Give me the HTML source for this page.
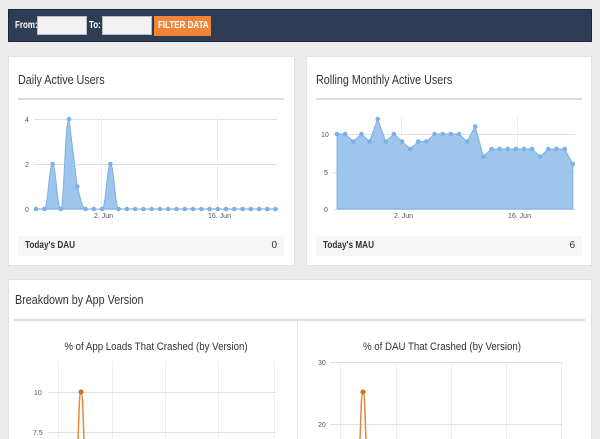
<!DOCTYPE html>
<html><head><style>
*{margin:0;padding:0;box-sizing:border-box}
html,body{width:600px;height:439px;overflow:hidden}
body{background:#ececec;font-family:"Liberation Sans",sans-serif;position:relative}
.bar{position:absolute;left:8px;top:9px;width:584px;height:33px;background:#2e3d55;border:1px solid #1c2638}
.lbl{position:absolute;top:10px;color:#fff;font-size:10px;font-weight:bold;white-space:nowrap;transform:scaleX(0.8);transform-origin:left}
.inp{position:absolute;top:6px;width:50px;height:19px;background:#f2f2f2;border:1px solid #bbb}
.btn{position:absolute;left:145px;top:6px;width:57px;height:20px;background:#f0853a;}
.btn span{position:absolute;left:4px;top:0;color:#fff;font-size:10px;font-weight:bold;line-height:20px;white-space:nowrap;transform:scaleX(0.8);transform-origin:left}
.card{position:absolute;background:#fff;border:1px solid #e2e2e2}
.t{position:absolute;font-size:12.5px;color:#333;white-space:nowrap;transform:scaleX(0.86);transform-origin:left}
.st{position:absolute;font-size:11px;color:#333;white-space:nowrap;text-align:center;transform:scaleX(0.88)}
.hr{position:absolute;height:2px;background:#ddd}
.foot{position:absolute;height:20px;background:#f6f6f6;font-size:10px;color:#333;line-height:20px}
.foot b{position:absolute;left:7px;white-space:nowrap;transform:scaleX(0.82);transform-origin:left}
.foot span{position:absolute;right:7px}
svg{position:absolute;left:0;top:0}
</style></head><body>
<div class="bar">
<div class="lbl" style="left:6px">From:</div><div class="inp" style="left:28px"></div>
<div class="lbl" style="left:80px">To:</div><div class="inp" style="left:93px"></div>
<div class="btn"><span>FILTER DATA</span></div>
</div>
<div class="card" style="left:8px;top:56px;width:287px;height:210px"></div>
<div class="card" style="left:306px;top:56px;width:286px;height:210px"></div>
<div class="card" style="left:8px;top:279px;width:584px;height:165px"></div>
<div class="t" style="left:18px;top:73px">Daily Active Users</div>
<div class="hr" style="left:18px;top:98px;width:266px"></div>
<div class="t" style="left:316px;top:73px">Rolling Monthly Active Users</div>
<div class="hr" style="left:316px;top:98px;width:266px"></div>
<div class="foot" style="left:18px;top:236px;width:266px"><b>Today's DAU</b><span>0</span></div>
<div class="foot" style="left:316px;top:236px;width:266px"><b>Today's MAU</b><span>6</span></div>
<div class="t" style="left:15px;top:293px">Breakdown by App Version</div>
<div class="hr" style="left:14px;top:319px;width:571px"></div>
<div style="position:absolute;left:297px;top:321px;width:1px;height:118px;background:#e4e4e4"></div>
<div class="st" style="left:0;width:312px;top:341px">% of App Loads That Crashed (by Version)</div>
<div class="st" style="left:297px;width:290px;top:341px">% of DAU That Crashed (by Version)</div>
<svg width="600" height="439" font-family="Liberation Sans" font-size="7" fill="#555">
<g stroke="#e0e0e0" stroke-width="1">
<line x1="34" y1="119.5" x2="277" y2="119.5"/><line x1="34" y1="164.5" x2="277" y2="164.5"/><line x1="34" y1="209.5" x2="277" y2="209.5"/>
<line x1="101.5" y1="115" x2="101.5" y2="209" stroke="#eee"/><line x1="217.5" y1="115" x2="217.5" y2="209" stroke="#eee"/>
<line x1="333" y1="134.5" x2="575" y2="134.5"/><line x1="333" y1="172.5" x2="575" y2="172.5"/><line x1="333" y1="209.5" x2="575" y2="209.5"/>
<line x1="401.5" y1="117" x2="401.5" y2="209" stroke="#eee"/><line x1="517.5" y1="117" x2="517.5" y2="209" stroke="#eee"/>
<g stroke="#eee"><line x1="58.5" y1="361" x2="58.5" y2="439"/><line x1="112.5" y1="361" x2="112.5" y2="439"/><line x1="165.5" y1="361" x2="165.5" y2="439"/><line x1="218.5" y1="361" x2="218.5" y2="439"/><line x1="274.5" y1="361" x2="274.5" y2="439"/>
<line x1="340.5" y1="362" x2="340.5" y2="439"/><line x1="396.5" y1="362" x2="396.5" y2="439"/><line x1="451.5" y1="362" x2="451.5" y2="439"/><line x1="506.5" y1="362" x2="506.5" y2="439"/><line x1="561.5" y1="362" x2="561.5" y2="439"/></g>
<line x1="48" y1="392.5" x2="276" y2="392.5"/><line x1="48" y1="432.5" x2="276" y2="432.5"/>
<line x1="330" y1="362.5" x2="562" y2="362.5"/><line x1="330" y1="424.5" x2="562" y2="424.5"/>
</g>
<text x="25" y="122">4</text><text x="25" y="167">2</text><text x="25" y="212">0</text>
<text x="94" y="218">2. Jun</text><text x="208" y="218">16. Jun</text>
<text x="321" y="137">10</text><text x="324" y="175">5</text><text x="324" y="212">0</text>
<text x="394" y="218">2. Jun</text><text x="508" y="218">16. Jun</text>
<text x="34" y="395">10</text><text x="33" y="435">7.5</text>
<text x="318" y="365">30</text><text x="318" y="427">20</text>
<path fill="#9ec5ec" stroke="#7cb0e6" stroke-width="1" d="M36 209 L44.3 209 C48 209 49 164 52.5 164 C56 164 57 209 60.8 209 C64 209 65 119 69 119 L77.3 186.5 C80 196 82 209 85.6 209 Z"/>
<path fill="#9ec5ec" stroke="#7cb0e6" d="M102 209 C106 209 107 164 110.4 164 C114 164 115 209 118.7 209 Z"/>
<line x1="36" y1="209" x2="275" y2="209" stroke="#7cb0e6"/>
<path fill="#9ec5ec" stroke="#7cb0e6" d="M337 134 L345.1 134 L353.3 141.5 L361.4 134 L369.5 141.5 L377.7 119 L385.8 141.5 L393.9 134 L402 141.5 L410.2 149 L418.3 141.5 L426.4 141.5 L434.6 134 L442.7 134 L450.8 134 L459 134 L467.1 141.5 L475.2 126.5 L483.4 156.5 L491.5 149 L499.6 149 L507.8 149 L515.9 149 L524 149 L532.1 149 L540.3 156.5 L548.4 149 L556.5 149 L564.7 149 L572.8 164 L572.8 209 L337 209 Z"/>
<path d="M78 439 C79 420 79 392 81 392 C83 392 83 420 84 439" fill="none" stroke="#e08a3c" stroke-width="1.5"/>
<circle cx="81" cy="392" r="2.5" fill="#d2691e"/>
<path d="M360 439 C361 420 361 392 363 392 C365 392 365 420 366 439" fill="none" stroke="#e08a3c" stroke-width="1.5"/>
<circle cx="363" cy="392" r="2.5" fill="#d2691e"/>
<g fill="#7cb0e6">
<circle cx="36" cy="209" r="2.3"/><circle cx="44.3" cy="209" r="2.3"/><circle cx="52.5" cy="164" r="2.3"/><circle cx="60.8" cy="209" r="2.3"/><circle cx="69" cy="119" r="2.3"/><circle cx="77.3" cy="186.5" r="2.3"/><circle cx="85.6" cy="209" r="2.3"/><circle cx="93.8" cy="209" r="2.3"/><circle cx="102" cy="209" r="2.3"/><circle cx="110.4" cy="164" r="2.3"/><circle cx="118.7" cy="209" r="2.3"/><circle cx="126.9" cy="209" r="2.3"/><circle cx="135.2" cy="209" r="2.3"/><circle cx="143.4" cy="209" r="2.3"/><circle cx="151.7" cy="209" r="2.3"/><circle cx="160" cy="209" r="2.3"/><circle cx="168.2" cy="209" r="2.3"/><circle cx="176.5" cy="209" r="2.3"/><circle cx="184.7" cy="209" r="2.3"/><circle cx="193" cy="209" r="2.3"/><circle cx="201.3" cy="209" r="2.3"/><circle cx="209.5" cy="209" r="2.3"/><circle cx="217.8" cy="209" r="2.3"/><circle cx="226" cy="209" r="2.3"/><circle cx="234.3" cy="209" r="2.3"/><circle cx="242.6" cy="209" r="2.3"/><circle cx="250.8" cy="209" r="2.3"/><circle cx="259.1" cy="209" r="2.3"/><circle cx="267.3" cy="209" r="2.3"/><circle cx="275.6" cy="209" r="2.3"/>
<circle cx="337" cy="134" r="2.3"/><circle cx="345.1" cy="134" r="2.3"/><circle cx="353.3" cy="141.5" r="2.3"/><circle cx="361.4" cy="134" r="2.3"/><circle cx="369.5" cy="141.5" r="2.3"/><circle cx="377.7" cy="119" r="2.3"/><circle cx="385.8" cy="141.5" r="2.3"/><circle cx="393.9" cy="134" r="2.3"/><circle cx="402" cy="141.5" r="2.3"/><circle cx="410.2" cy="149" r="2.3"/><circle cx="418.3" cy="141.5" r="2.3"/><circle cx="426.4" cy="141.5" r="2.3"/><circle cx="434.6" cy="134" r="2.3"/><circle cx="442.7" cy="134" r="2.3"/><circle cx="450.8" cy="134" r="2.3"/><circle cx="459" cy="134" r="2.3"/><circle cx="467.1" cy="141.5" r="2.3"/><circle cx="475.2" cy="126.5" r="2.3"/><circle cx="483.4" cy="156.5" r="2.3"/><circle cx="491.5" cy="149" r="2.3"/><circle cx="499.6" cy="149" r="2.3"/><circle cx="507.8" cy="149" r="2.3"/><circle cx="515.9" cy="149" r="2.3"/><circle cx="524" cy="149" r="2.3"/><circle cx="532.1" cy="149" r="2.3"/><circle cx="540.3" cy="156.5" r="2.3"/><circle cx="548.4" cy="149" r="2.3"/><circle cx="556.5" cy="149" r="2.3"/><circle cx="564.7" cy="149" r="2.3"/><circle cx="572.8" cy="164" r="2.3"/>
</g>
</svg>
</body></html>
